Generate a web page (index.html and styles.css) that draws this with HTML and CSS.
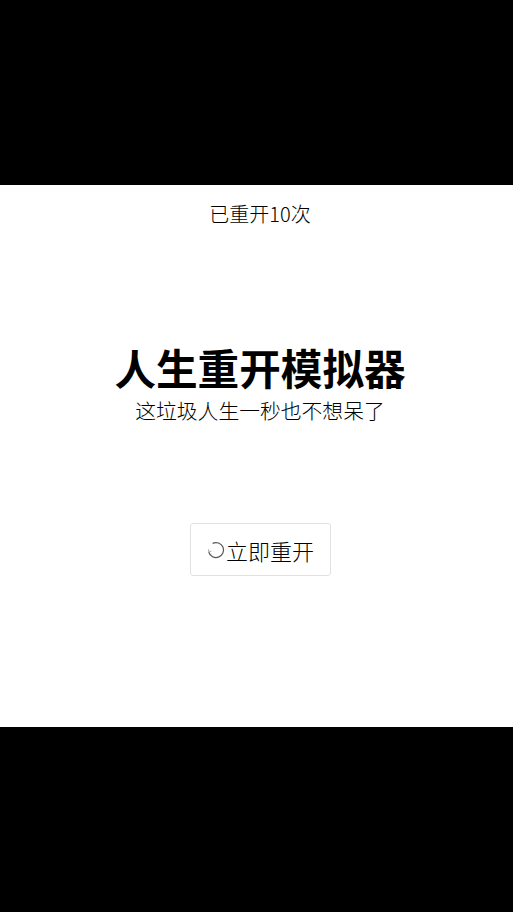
FILE: index.html
```html
<!DOCTYPE html>
<html lang="zh-CN">
<head>
<meta charset="utf-8">
<title>人生重开模拟器</title>
<link rel="stylesheet" href="styles.css">
</head>
<body>
<main class="screen">
  <div class="count">已重开10次</div>
  <div class="hero">
    <h1 class="title">人生重开模拟器</h1>
    <p class="subtitle">这垃圾人生一秒也不想呆了</p>
  </div>
  <button class="restart" type="button">
    <svg class="icon" viewBox="0 0 20 20" width="20" height="20" aria-hidden="true">
      <path d="M6.6 3.4A7.5 7.5 0 1 1 2.8 12" fill="none" stroke="#555" stroke-width="1.2"/>
      <path d="M2.6 9.2L2.8 12.2L5.4 11" fill="none" stroke="#aaa" stroke-width="1"/>
    </svg>
    <span>立即重开</span>
  </button>
</main>
</body>
</html>
```
FILE: styles.css
```css
* { box-sizing: border-box; }
html, body { margin: 0; height: 100%; background: #000; }
body {
  display: flex;
  flex-direction: column;
  justify-content: center;
  font-family: "Noto Sans CJK SC", "Liberation Sans", sans-serif;
  color: #000;
}
.screen {
  height: 542px;
  padding-left: 7px;
  background: #fff;
  display: flex;
  flex-direction: column;
  align-items: center;
}
.count {
  margin-top: 16px;
  font-size: 20px;
  line-height: 26px;
  font-weight: 300;
  color: #000;
}
.hero {
  margin-top: 118px;
  text-align: center;
}
.title {
  margin: 0;
  font-size: 41.6px;
  line-height: 44px;
  font-weight: 700;
}
.subtitle {
  margin: 7px 0 0;
  font-size: 20.8px;
  line-height: 28px;
  font-weight: 300;
  color: #000;
}
.restart {
  margin-top: 99px;
  width: 141px;
  height: 53px;
  display: flex;
  align-items: center;
  justify-content: center;
  padding: 0;
  background: #fff;
  border: 1px solid #e2e2e2;
  border-radius: 3px;
  font: inherit;
  font-size: 22px;
  font-weight: 300;
  color: #000;
}
.icon { flex: none; }
```
